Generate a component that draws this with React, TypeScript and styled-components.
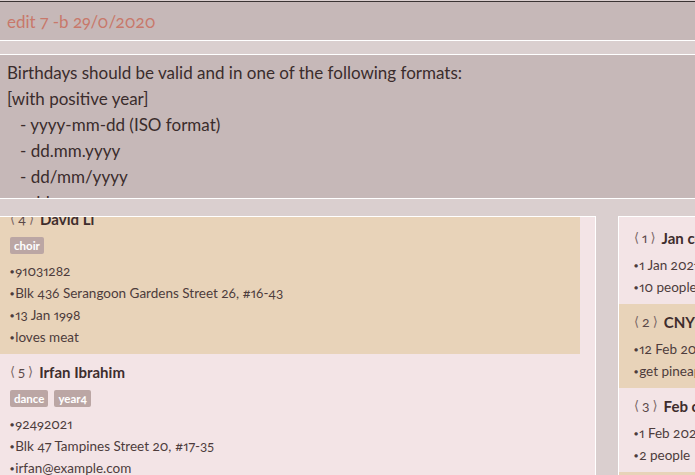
import React from "react";
import styled, { createGlobalStyle } from "styled-components";

const GlobalStyle = createGlobalStyle`
  html, body { margin: 0; padding: 0; }
  body {
    background: #dacfcf;
    font-family: Lato, "Open Sans", sans-serif;
    font-variant-numeric: oldstyle-nums proportional-nums;
    font-feature-settings: "onum" 1;
  }
`;

const Page = styled.div`
  width: 695px;
  height: 475px;
  overflow: hidden;
  display: flex;
  flex-direction: column;
  padding-top: 1px;
  box-sizing: border-box;
`;

const CommandBox = styled.div`
  height: 38px;
  flex: none;
  background: #c6b8b8;
  border-top: 1px solid #3b3434;
  border-bottom: 1px solid #ffffff;
  display: flex;
  align-items: center;
  padding: 0 7px;
  color: #c8786b;
  font-size: 17px;
`;

const Strip = styled.div<{ $h: number; $line?: boolean }>`
  height: ${(p) => p.$h}px;
  flex: none;
  border-bottom: ${(p) => (p.$line ? "1px solid #ffffff" : "none")};
`;

const ResultBox = styled.div`
  height: 144px;
  flex: none;
  overflow: hidden;
  background: #c6b8b8;
  border-bottom: 1px solid #ffffff;
  padding: 5px 7px 0;
  box-sizing: border-box;
  color: #3a2c2c;
  font-size: 17px;
  line-height: 26px;
  white-space: pre;
`;

const Panels = styled.div`
  flex: 1;
  display: flex;
  gap: 22px;
  min-height: 0;
`;

const ListPanel = styled.div<{ $side: "left" | "right" }>`
  background: #f3e4e6;
  border-top: 1px solid #ffffff;
  ${(p) =>
    p.$side === "left"
      ? "width: 596px; border-right: 1px solid #ffffff; padding-right: 15px;"
      : "flex: 1; border-left: 1px solid #ffffff; padding-top: 3px;"}
  box-sizing: border-box;
  overflow: hidden;
  display: flex;
  flex-direction: column;
`;

const Card = styled.div<{ $alt: boolean; $offset?: number; $pl: number }>`
  background: ${(p) => (p.$alt ? "#e8d3b9" : "transparent")};
  padding: 8px 0 6px ${(p) => p.$pl}px;
  margin-top: ${(p) => p.$offset ?? 0}px;
  display: flex;
  flex-direction: column;
  flex: none;
  white-space: nowrap;
`;

const Header = styled.div`
  height: 20px;
  line-height: 20px;
  font-size: 15px;
  font-weight: 700;
  color: #3e2d2d;
  display: flex;
  align-items: center;
`;

const Index = styled.span`
  font-weight: 400;
  color: #5b4949;
  font-size: 14px;
  margin-right: 6px;
  display: inline-flex;
  gap: 3px;
  align-items: center;
`;

const Bracket = styled.span`
  font-family: "DejaVu Sans", sans-serif;
  font-size: 13px;
  color: #7a6767;
`;

const Tags = styled.div`
  display: flex;
  gap: 6px;
  margin-top: 8px;
`;

const Tag = styled.span`
  background: #bba6a4;
  color: #ffffff;
  font-size: 11.5px;
  font-weight: 700;
  height: 17px;
  line-height: 17px;
  padding: 0 4px;
  border-radius: 2px;
`;

const Fields = styled.div`
  margin-top: 6px;
  display: flex;
  flex-direction: column;
`;

const Field = styled.div`
  height: 22px;
  line-height: 22px;
  font-size: 13.5px;
  color: #4d3c3c;
  display: flex;
  align-items: center;
`;

const Bullet = styled.span`
  font-size: 7px;
  margin-right: 1px;
  color: #4d3c3c;
`;

type Item = {
  idx: number;
  name: string;
  tags: string[];
  fields: string[];
};

const persons: Item[] = [
  {
    idx: 4,
    name: "David Li",
    tags: ["choir"],
    fields: ["91031282", "Blk 436 Serangoon Gardens Street 26, #16-43", "13 Jan 1998", "loves meat"],
  },
  {
    idx: 5,
    name: "Irfan Ibrahim",
    tags: ["dance", "year4"],
    fields: ["92492021", "Blk 47 Tampines Street 20, #17-35", "irfan@example.com", "likes cats"],
  },
];

const events: Item[] = [
  { idx: 1, name: "Jan celebration", tags: [], fields: ["1 Jan 2021", "10 people"] },
  { idx: 2, name: "CNY", tags: [], fields: ["12 Feb 2021", "get pineapple tarts"] },
  { idx: 3, name: "Feb outing", tags: [], fields: ["1 Feb 2021", "2 people"] },
  { idx: 4, name: "March party", tags: [], fields: ["1 Mar 2021", "5 people"] },
];

const ItemCard = ({ item, alt, offset, pl }: { item: Item; alt: boolean; offset?: number; pl: number }) => (
  <Card $alt={alt} $offset={offset} $pl={pl}>
    <Header>
      <Index>
        <Bracket>⟨</Bracket>
        {item.idx}
        <Bracket>⟩</Bracket>
      </Index>
      {item.name}
    </Header>
    {item.tags.length > 0 && (
      <Tags>
        {item.tags.map((t) => (
          <Tag key={t}>{t}</Tag>
        ))}
      </Tags>
    )}
    <Fields>
      {item.fields.map((f) => (
        <Field key={f}>
          <Bullet>●</Bullet>
          {f}
        </Field>
      ))}
    </Fields>
  </Card>
);

const resultText = `Birthdays should be valid and in one of the following formats:
[with positive year]
   - yyyy-mm-dd (ISO format)
   - dd.mm.yyyy
   - dd/mm/yyyy
   - dd mm yyyy`;

export default function App() {
  return (
    <>
      <GlobalStyle />
      <Page>
        <CommandBox>edit 7 -b 29/0/2020</CommandBox>
        <Strip $h={13} $line />
        <ResultBox>{resultText}</ResultBox>
        <Strip $h={17} />
        <Panels>
          <ListPanel $side="left">
            {persons.map((p, i) => (
              <ItemCard key={p.idx} item={p} alt={i % 2 === 0} offset={i === 0 ? -16 : 0} pl={10} />
            ))}
          </ListPanel>
          <ListPanel $side="right">
            {events.map((e, i) => (
              <ItemCard key={e.idx} item={e} alt={i % 2 === 1} pl={15} />
            ))}
          </ListPanel>
        </Panels>
      </Page>
    </>
  );
}
